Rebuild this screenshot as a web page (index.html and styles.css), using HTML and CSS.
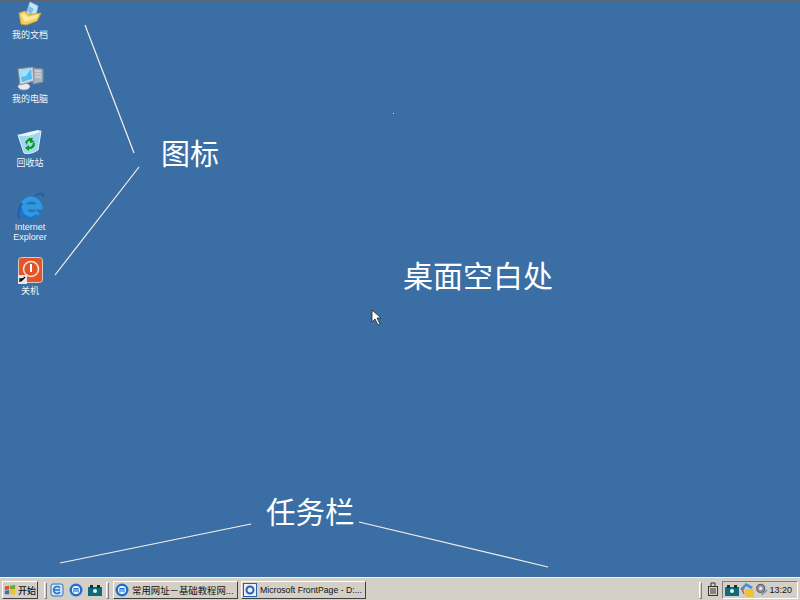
FILE: index.html
```html
<!DOCTYPE html>
<html lang="zh-CN">
<head>
  <meta charset="utf-8">
  <title>桌面</title>
  <link rel="stylesheet" href="styles.css">
</head>
<body>
  <div class="screen">
    <div class="desktop">
      <div class="desk-icon icon-docs">
        <svg width="32" height="32" viewBox="0 0 32 32">
          <path d="M16 5 L24 9 L21 22 L11 20 Z" fill="#c6e6f6" stroke="#8fbfdc"/>
          <path d="M15 9 L20 12 L17 18 L13 14 Z" fill="#7fc0ea"/>
          <path d="M5 16 L11 14 L14 18 L27 16 L23 24 L12 28 L7 27 Z" fill="#f3cf5e" stroke="#c9a43a"/>
          <path d="M7 18 L11 25 L23 21 L25 17 L14 20 L10 16 Z" fill="#fbeaa0"/>
        </svg>
        <span class="desk-label">我的文档</span>
      </div>
      <div class="desk-icon icon-computer">
        <svg width="32" height="32" viewBox="0 0 32 32">
          <path d="M19 7 L29 8 V21 L19 23 Z" fill="#a9b3bf" stroke="#7b8897"/>
          <path d="M21 10 H27 M21 13 H27 M21 16 H27" stroke="#dfe4ea"/>
          <ellipse cx="10" cy="25.500" rx="6" ry="3.500" fill="#e9ebee" stroke="#9aa4b0"/>
          <path d="M4 8 L19 6 L20 20 L6 24 Z" fill="#cdd6e0" stroke="#7e8ea0"/>
          <path d="M6 10 L17 8 L18 18 L8 21 Z" fill="#52bcf0"/>
          <path d="M6 10 L17 8 L12 15 L7 16 Z" fill="#9fe0fa"/>
        </svg>
        <span class="desk-label">我的电脑</span>
      </div>
      <div class="desk-icon icon-recycle">
        <svg width="32" height="32" viewBox="0 0 32 32">
          <path d="M4 10 Q15 12 27 6 L24 25 Q16 30 10 28 Z" fill="#9fd6f0" stroke="#dff3fb"/>
          <path d="M4 10 Q14 7 24 5 L27 6 Q15 13 4 10 Z" fill="#e8f7fd"/>
          <path d="M11 17 L15 13 L19 13 L18 15 L21 17 L16 18 L16 16 Q13 16 13 20 Z" fill="#0a9a1e"/>
          <path d="M21 18 Q21 24 15 24 L15 26 L11 23 L15 20 L15 22 Q18 22 19 18 Z" fill="#0a9a1e"/>
        </svg>
        <span class="desk-label">回收站</span>
      </div>
      <div class="desk-icon icon-ie">
        <svg width="32" height="32" viewBox="0 0 32 32">
          <path d="M9 15 A9 9 0 0 1 26 18 H10 A8 8 0 0 0 24 23" fill="none" stroke="#2b9be8" stroke-width="5"/>
          <path d="M7 19 A9 9 0 0 0 23 26" fill="none" stroke="#1a74cf" stroke-width="3"/>
          <path d="M21 7 C26 3 30 4 29 8 M8 14 C4 20 3 27 6 29" fill="none" stroke="#1c5f9f" stroke-width="1.500"/>
        </svg>
        <span class="desk-label">Internet<br>Explorer</span>
      </div>
      <div class="desk-icon icon-off">
        <svg width="32" height="28" viewBox="0 0 32 28">
          <rect x="4.500" y="0.500" width="24" height="25" rx="3" fill="#e2552a" stroke="#d9cdc6"/>
          <circle cx="17" cy="12" r="7.500" fill="none" stroke="#fbe5da" stroke-width="1.500"/>
          <rect x="16" y="7" width="2" height="8" fill="#fff"/>
          <rect x="4" y="18" width="9" height="9" fill="#e8e8e8"/>
          <path d="M6 25 V22 H9 M7 24 L11 20" fill="none" stroke="#000" stroke-width="1.300"/>
        </svg>
        <span class="desk-label">关机</span>
      </div>

      <svg class="callouts" width="800" height="577" viewBox="0 0 800 577">
        <g stroke="#f4f1ea" stroke-width="1.200">
          <line x1="85" y1="25" x2="134" y2="153"/>
          <line x1="139" y1="167" x2="55" y2="275"/>
          <line x1="251" y1="524" x2="60" y2="563"/>
          <line x1="359" y1="522" x2="548" y2="567"/>
        </g>
        <rect x="393" y="113" width="1" height="1" fill="#dfe6ee"/>
        <path d="M372 310 V322 L375 319 L378 325 L380 324 L377 318 L381 318 Z" fill="#fff" stroke="#222" stroke-width="0.800"/>
      </svg>

      <span class="note note-icons">图标</span>
      <span class="note note-blank">桌面空白处</span>
      <span class="note note-bar">任务栏</span>
    </div>

    <div class="taskbar">
      <button class="start-btn">
        <svg width="14" height="14" viewBox="0 0 14 14">
          <path d="M1 3 L6 2 V6 L1 7 Z" fill="#d8502a"/>
          <path d="M7 2 L13 1 V6 L7 6 Z" fill="#6aa83a"/>
          <path d="M1 8 L6 7 V12 L1 12 Z" fill="#3a6fc0"/>
          <path d="M7 7 L13 7 V12 L7 12 Z" fill="#eec02e"/>
        </svg>
        开始
      </button>
      <span class="grip grip-start"></span>
      <div class="quick">
        <svg width="16" height="16" viewBox="0 0 16 16">
          <rect x="2" y="2" width="12" height="12" rx="2" fill="#cfe3f5" stroke="#2d72c0"/>
          <path d="M11 6 A3.500 3.500 0 1 0 11 10 M5 8 H11" fill="none" stroke="#1b6fd0" stroke-width="1.500"/>
        </svg>
        <svg width="16" height="16" viewBox="0 0 16 16">
          <circle cx="8" cy="8" r="6.500" fill="#1f6fd0"/>
          <circle cx="8" cy="8" r="4" fill="#fff"/>
          <path d="M6 10.500 V6.500 H10 V10.500 M8 6.500 V10" fill="none" stroke="#1f6fd0" stroke-width="1.200"/>
        </svg>
        <svg width="16" height="16" viewBox="0 0 16 16">
          <rect x="1" y="5" width="14" height="9" fill="#0f6b7a"/>
          <rect x="3" y="3" width="3" height="3" fill="#13313a"/>
          <rect x="10" y="3" width="3" height="3" fill="#13313a"/>
          <circle cx="8" cy="9" r="2" fill="#e4f2f2"/>
        </svg>
      </div>
      <span class="grip grip-quick"></span>
      <div class="tasks">
        <button class="task-btn">
          <svg width="16" height="16" viewBox="0 0 16 16">
            <circle cx="8" cy="8" r="6.500" fill="#1f6fd0"/>
            <circle cx="8" cy="8" r="4" fill="#fff"/>
            <path d="M6 10.500 V6.500 H10 V10.500 M8 6.500 V10" fill="none" stroke="#1f6fd0" stroke-width="1.200"/>
          </svg>
          <span class="task-text task-cn">常用网址－基础教程网...</span>
        </button>
        <button class="task-btn">
          <svg width="16" height="16" viewBox="0 0 16 16">
            <rect x="1.500" y="1.500" width="13" height="13" fill="#e8f0fa" stroke="#2a5fb0"/>
            <circle cx="8" cy="8" r="3.500" fill="none" stroke="#2a5fb0" stroke-width="2"/>
          </svg>
          <span class="task-text">Microsoft FrontPage - D:...</span>
        </button>
      </div>
      <span class="bar-fill"></span>
      <span class="grip"></span>
      <svg class="bar-tool" width="12" height="16" viewBox="0 0 12 16">
        <rect x="1.500" y="4.500" width="9" height="9" fill="#d8d4cc" stroke="#333"/>
        <path d="M3 7 H9 M3 9 H9 M3 11 H9 M4 4 V1 H8 V4" fill="none" stroke="#333"/>
      </svg>
      <div class="tray">
        <svg width="14" height="16" viewBox="1 0 14 16">
          <rect x="1" y="5" width="14" height="9" fill="#0f6b7a"/>
          <rect x="3" y="3" width="3" height="3" fill="#13313a"/>
          <rect x="10" y="3" width="3" height="3" fill="#13313a"/>
          <circle cx="8" cy="9" r="2" fill="#e4f2f2"/>
        </svg>
        <svg width="16" height="16" viewBox="0 0 16 16">
          <path d="M2 6 L7 1 L14 5 L12 7 L7 4 L4 9 Z" fill="#3d8fe0"/>
          <path d="M2 6 L5 12 L4 9 Z" fill="#e0502a" stroke="#e0502a"/>
          <rect x="6" y="7" width="9" height="8" rx="1" fill="#efc23a"/>
        </svg>
        <svg width="13" height="16" viewBox="0 0 16 16">
          <circle cx="7" cy="6" r="5" fill="#8f959b" stroke="#444"/>
          <circle cx="7" cy="6" r="2" fill="#eee"/>
          <path d="M8 14 L15 8" stroke="#7c8fc0" stroke-width="2"/>
        </svg>
        <span class="clock">13:20</span>
      </div>
    </div>
  </div>
</body>
</html>
```

FILE: styles.css
```css
* {
  box-sizing: border-box;
}

body {
  margin: 0;
  overflow: hidden;
}

.screen {
  width: 800px;
  height: 600px;
  display: flex;
  flex-direction: column;
  font-family: "Noto Sans CJK SC", "Liberation Sans", sans-serif;
}

.desktop {
  position: relative;
  height: 577px;
  background-color: #3a6ea5;
  border-top: 1px solid #5c6670;
  box-shadow: inset 0 1px #4d6a88;
  overflow: hidden;
}

.desk-icon {
  position: absolute;
  left: 5px;
  width: 50px;
  display: flex;
  flex-direction: column;
  align-items: center;
  color: #fff;
}

.desk-icon svg {
  display: block;
}

.desk-label {
  margin-top: 1px;
  font-family: "Liberation Sans", "Noto Sans CJK SC", sans-serif;
  font-size: 9px;
  line-height: 10px;
  text-align: center;
  color: #f2f5f8;
}

.icon-docs { top: -4px; }
.icon-computer { top: 60px; }
.icon-recycle { top: 124px; }
.icon-ie { top: 188px; }
.icon-off { top: 256px; }

.callouts {
  position: absolute;
  left: 0;
  top: -1px;
}

.note {
  position: absolute;
  color: #fff;
  font-size: 29px;
  line-height: 40px;
  white-space: nowrap;
}

.note-icons { left: 161px; top: 131px; }
.note-blank { left: 403px; top: 253px; font-size: 30px; }
.note-bar { left: 266px; top: 489px; font-size: 29.500px; }

.taskbar {
  height: 23px;
  display: flex;
  align-items: center;
  padding: 2px 2px 0;
  background-color: #d4d0c8;
  border-top: 1px solid #f4f2ec;
  font-size: 9px;
  color: #111;
}

.start-btn,
.task-btn {
  display: flex;
  align-items: center;
  height: 18px;
  gap: 2px;
  margin: 0;
  background-color: #d4d0c8;
  border: 1px solid;
  border-color: #fff #404040 #404040 #fff;
  font: inherit;
  color: inherit;
  white-space: nowrap;
}

.start-btn {
  width: 36px;
  padding: 0 1px;
  font-weight: 500;
}

.task-btn {
  width: 125px;
  padding: 0;
  overflow: hidden;
}

.task-btn svg,
.tray svg {
  flex-shrink: 0;
}

.task-text {
  font-family: "Liberation Sans", "Noto Sans CJK SC", sans-serif;
  font-size: 8.700px;
}

.task-cn {
  font-size: 9.400px;
}

.tasks {
  display: flex;
  gap: 3px;
  margin-left: 4px;
}

.grip {
  width: 3px;
  height: 17px;
  border: 1px solid;
  border-color: #fff #808080 #808080 #fff;
}

.grip-start { margin: 0 2px 0 6px; }
.grip-quick { margin-left: 3px; }

.quick {
  display: flex;
  gap: 3px;
}

.bar-fill {
  flex: 1;
}

.bar-tool {
  margin: 0 3px 0 5px;
}

.tray {
  display: flex;
  align-items: center;
  width: 76px;
  height: 18px;
  padding-left: 2px;
  border: 1px solid;
  border-color: #808080 #fff #fff #808080;
}

.clock {
  flex: 1;
  text-align: right;
  padding-right: 5px;
  font-family: "Liberation Sans", sans-serif;
  font-size: 9px;
}
```
